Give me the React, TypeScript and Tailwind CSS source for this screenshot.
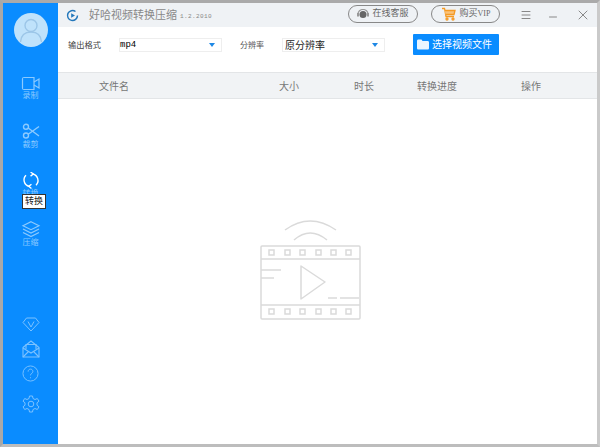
import type { ReactNode } from "react";
import { Menu, Minus, X } from "lucide-react";

const font = "font-['Liberation_Sans','Noto_Sans_CJK_SC',sans-serif]";

const NavItem = ({ label, icon }: { label: string; icon: ReactNode }) => (
  <div className="flex flex-col items-center h-[49px] text-[#8ccaff]">
    {icon}
    <span className="text-[8px] leading-[10px] mt-[-3px]">{label}</span>
  </div>
);

const Avatar = () => (
  <div className="w-[34px] h-[34px] rounded-full bg-[#bfe2fb] overflow-hidden flex items-center justify-center">
    <svg width="34" height="34" viewBox="0 0 34 34" fill="none" stroke="#9cc6e8" strokeWidth="1.4">
      <circle cx="17" cy="12.5" r="6" />
      <path d="M6.500 29c.5-6.500 4.500-10 10.500-10s10 3.500 10.500 10" />
    </svg>
  </div>
);

const Triangle = () => <span className="w-0 h-0 border-x-[3px] border-x-transparent border-t-[4px] border-t-[#1e88e5]" />;

const FilmIcon = () => (
  <svg width="102" height="100" viewBox="0 0 102 100" fill="none" stroke="#dadada" strokeWidth="1.5">
    <path d="M25 10Q50 -8 76 10" />
    <path d="M34 20Q50 6 67 20" />
    <rect x="1" y="26" width="99" height="73" rx="1" />
    <path d="M1 39H100M1 85H100" />
    {[9, 25, 40, 56, 71, 86].map((x) => (
      <g key={x}>
        <rect x={x} y="30" width="5" height="5" />
        <rect x={x} y="89" width="5" height="5" />
      </g>
    ))}
    <path d="M1 50H21M1 58H14" />
    <path d="M41 46V79L65 62Z" strokeLinejoin="round" />
    <path d="M68 78H77M80 78H99" />
  </svg>
);

export default function App() {
  return (
    <div className={`${font} w-[600px] h-[447px] border-t-[3px] border-l-[3px] border-r-[3px] border-b-[3px] border-t-[#aaaaaa] border-l-[#a8a8a8] border-r-[#cacaca] border-b-[#bdbdbd] overflow-hidden box-border`}>
      <div className="flex h-full bg-white">
        <aside className="w-[55px] bg-[#0a8cff] flex flex-col items-center shrink-0 relative">
          <div className="mt-[10px]"><Avatar /></div>
          <div className="mt-[27px] flex flex-col items-center">
            <NavItem
              label="录制"
              icon={
                <svg width="20" height="20" viewBox="0 0 20 20" fill="none" stroke="currentColor" strokeWidth="1.200">
                  <path d="M3 3.500H13V15.500H3C1.500 15.500 1.500 15.500 1.500 14V5C1.500 3.500 1.500 3.500 3 3.500Z" />
                  <path d="M13 8L18 5V14L13 11" />
                </svg>
              }
            />
            <NavItem
              label="裁剪"
              icon={
                <svg width="20" height="20" viewBox="0 0 20 20" fill="none" stroke="currentColor" strokeWidth="1.400">
                  <circle cx="5" cy="3.800" r="2.500" />
                  <circle cx="5" cy="12.500" r="2.500" />
                  <path d="M7.200 5L18 13M7.200 11.300L18 3.500" />
                </svg>
              }
            />
            <NavItem
              label="转换"
              icon={
                <svg className="text-white" width="20" height="20" viewBox="-1 1 22 22" fill="none" stroke="currentColor" strokeWidth="1.500">
                  <path d="M12 3.200A7.300 7.300 0 0 1 15.500 15.500" />
                  <path d="M8 16.800A7.300 7.300 0 0 1 4.500 4.500" />
                  <path d="M9.500 1L12.500 3.200L9.500 5.500" />
                  <path d="M10.500 14.500L7.500 16.800L10.500 19.200" />
                </svg>
              }
            />
            <NavItem
              label="压缩"
              icon={
                <svg width="20" height="20" viewBox="0 0 20 20" fill="none" stroke="currentColor" strokeWidth="1.200">
                  <path d="M10 0.700L18 4.700L10 8.700L2 4.700Z" />
                  <path d="M2 8L10 12L18 8" />
                  <path d="M2 11.500L10 15.500L18 11.500" />
                </svg>
              }
            />
          </div>
          <div className="absolute left-[19px] top-[191px] w-[24px] h-[15px] border border-[#333] bg-white text-[9px] leading-none text-[#222] flex items-center justify-center whitespace-nowrap">转换</div>
          <div className="mt-auto mb-[31px] flex flex-col items-center text-[#7cc2ff]">
            <svg width="18" height="15" viewBox="0 0 18 15" fill="none" stroke="currentColor" strokeWidth="1">
              <path d="M4.500 1H13.500L17 5.500L9 14L1 5.500Z" />
              <path d="M6 4.500L9 10L12 4.500" />
            </svg>
            <svg className="mt-[8px]" width="18" height="18" viewBox="0 0 18 18" fill="none" stroke="currentColor" strokeWidth="1.100">
              <path d="M1 7.500L9 1L17 7.500V17H1Z" />
              <path d="M4 9V4.500H14V9" />
              <path d="M1 8L9 13L17 8" />
              <path d="M1 17L6.500 11.500M17 17L11.500 11.500" />
            </svg>
            <svg className="mt-[7px]" width="17" height="17" viewBox="0 0 18 18" fill="none" stroke="currentColor" strokeWidth="1">
              <circle cx="9" cy="9" r="8" />
              <path d="M6.500 7C6.500 3.500 11.500 3.500 11.500 7C11.500 8.800 9 8.800 9 11" />
              <path d="M9 13V14" />
            </svg>
            <svg className="mt-[13px]" width="18" height="18" viewBox="0 0 18 18" fill="none" stroke="currentColor" strokeWidth="1">
              <circle cx="9" cy="9" r="2.800" />
              <path d="M7.500 1H10.500L11 3.500L13 4.500L15.300 3.500L17 6.200L15 7.800V10.200L17 11.800L15.300 14.500L13 13.500L11 14.500L10.500 17H7.500L7 14.500L5 13.500L2.700 14.500L1 11.800L3 10.200V7.800L1 6.200L2.700 3.500L5 4.500L7 3.500Z" strokeLinejoin="round" />
            </svg>
          </div>
        </aside>

        <main className="flex-1 flex flex-col min-w-0">
          <header className="h-[24px] bg-[#eff2f5] flex items-center text-[#888] shrink-0">
            <svg className="ml-[8px]" width="13" height="13" viewBox="0 0 13 13" fill="none">
              <path d="M11.500 6.500A5 5 0 1 1 9.500 2.500" stroke="#2277bb" strokeWidth="1.500" />
              <path d="M5.200 4.200V8.800L9 6.500Z" fill="#2277bb" />
            </svg>
            <span className="ml-[10px] text-[11px] leading-none">好哈视频转换压缩</span>
            <span className="ml-[3px] mt-[2px] text-[6px] tracking-[0.4px] font-['Liberation_Mono',monospace]">1.2.2010</span>
            <div className="ml-auto flex items-center">
              <div className="mt-[-3px] w-[70px] h-[18px] rounded-full border border-[#888] flex items-center justify-center gap-[3px] text-[9px] text-[#666]">
                <svg width="12" height="10" viewBox="0 0 12 10" fill="#666">
                  <path d="M1 5a5 4.500 0 0 1 10 0" fill="none" stroke="#999" strokeWidth="1.200" />
                  <circle cx="6" cy="5.500" r="3.500" />
                  <rect x="0" y="4" width="2" height="3.500" fill="#999" />
                  <rect x="10" y="4" width="2" height="3.500" fill="#999" />
                </svg>
                在线客服
              </div>
              <div className="ml-[13px] mt-[-3px] w-[69px] h-[18px] rounded-full border border-[#888] flex items-center justify-center gap-[4px] text-[9px] text-[#666]">
                <svg width="15" height="14" viewBox="0 0 15 14" fill="none" stroke="#f59a23" strokeWidth="1.300">
                  <path d="M1 1.500H3.500L5 9.500H13" />
                  <path d="M4 3.500H14L13 7.500H4.500" fill="#f9c27a" />
                  <circle cx="6" cy="12" r="1" />
                  <circle cx="12" cy="12" r="1" />
                </svg>
                <span>购买<span className="font-['Liberation_Serif',serif] text-[8px]">VIP</span></span>
              </div>
              <Menu className="ml-[20px]" size={12} strokeWidth={2} />
              <Minus className="ml-[15px] mt-[4px]" size={12} strokeWidth={2} />
              <X className="ml-[16px] mr-[6px]" size={16} strokeWidth={1.500} />
            </div>
          </header>

          <div className="h-[45px] flex items-start shrink-0 bg-white">
            <span className="ml-[10px] mt-[13px] text-[8.250px] leading-[12px] text-[#444]">输出格式</span>
            <div className="ml-[18px] mt-[11px] w-[103px] h-[14px] border border-[#eee] flex items-center justify-between pr-[6px] text-[9px] font-['Liberation_Mono',monospace] text-black">
              <span className="pt-[2px]">mp4</span>
              <Triangle />
            </div>
            <span className="ml-[18px] mt-[13px] text-[8px] leading-[12px] text-[#555]">分辨率</span>
            <div className="ml-[18px] mt-[11px] w-[103px] h-[14px] border border-[#eee] flex items-center justify-between pl-[2px] pr-[6px] text-[10px] text-[#222]">
              原分辨率
              <Triangle />
            </div>
            <button className="ml-[28px] mt-[7px] w-[86px] h-[21px] bg-[#0a8cff] rounded-[1px] text-white text-[10px] flex items-center pl-[4px] gap-[3px] whitespace-nowrap">
              <svg width="12" height="11" viewBox="0 0 12 11" fill="#eaf5ff">
                <path d="M0 2C0 1 .5.500 1.500.500H4.500L5.500 2H10.500C11.500 2 12 2.500 12 3.500V9C12 10 11.500 10.500 10.500 10.500H1.500C.5 10.500 0 10 0 9Z" />
              </svg>
              选择视频文件
            </button>
          </div>

          <div className="h-[27px] pt-[1px] bg-[#f1f3f5] border-y border-[#e3e5e7] text-[10px] text-[#777] grid grid-cols-[221px_75px_63px_104px_1fr] items-center shrink-0">
            <span className="pl-[41px]">文件名</span>
            <span>大小</span>
            <span>时长</span>
            <span>转换进度</span>
            <span>操作</span>
          </div>

          <div className="flex-1 flex items-start bg-white pt-[121px] pl-[202px]">
            <FilmIcon />
          </div>
        </main>
      </div>
    </div>
  );
}
